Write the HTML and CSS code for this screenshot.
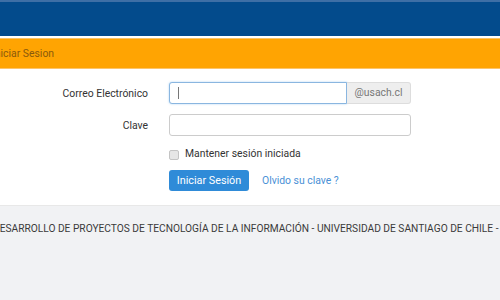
FILE: index.html
```html
<!DOCTYPE html>
<html lang="es">
<head>
    <meta charset="UTF-8">
    <meta name="viewport" content="width=device-width, initial-scale=1.0">
    <title>Iniciar Sesion</title>
    <link rel="stylesheet" href="styles.css">
</head>
<body>
    <div class="topbar"></div>

    <div class="panel-heading">Iniciar Sesion</div>

    <div class="login">
        <form class="login-form">
            <label class="form-label" for="correo">Correo Electrónico</label>
            <div class="input-group">
                <div class="field field-focus" id="correo"><span class="caret"></span></div>
                <span class="addon">@usach.cl</span>
            </div>

            <label class="form-label" for="clave">Clave</label>
            <div class="field" id="clave"></div>

            <span></span>
            <div class="check-row">
                <span class="checkbox"></span>
                <span>Mantener sesión iniciada</span>
            </div>

            <span></span>
            <div class="actions">
                <button type="button" class="btn">Iniciar Sesión</button>
                <a href="#" class="forgot">Olvido su clave ?</a>
            </div>
        </form>
    </div>

    <footer class="footer">
        <div class="footer-text">DESARROLLO DE PROYECTOS DE TECNOLOGÍA DE LA INFORMACIÓN - UNIVERSIDAD DE SANTIAGO DE CHILE - 2018</div>
    </footer>
</body>
</html>
```

FILE: styles.css
```css
html, body {
    height: 100%;
}
body {
    margin: 0;
    font-family: Roboto, "Liberation Sans", Arial, sans-serif;
    font-size: 10.4px;
    color: #333;
    background: #fff;
    display: flex;
    flex-direction: column;
    overflow: hidden;
}
.topbar {
    height: 34px;
    background: #034b8c;
    border-top: 2px solid #3e6fa6;
    border-bottom: 2px solid #fff;
}
.panel-heading {
    height: 29px;
    line-height: 29px;
    background: #ffa402;
    border-top: 1px solid #fbc468;
    border-bottom: 1px solid #fcc46a;
    color: #8a5a0c;
    text-indent: -8px;
}
.login {
    padding-top: 13px;
    height: 123px;
}
.login-form {
    display: grid;
    grid-template-columns: 148px 242px;
    column-gap: 21px;
    row-gap: 10px;
    align-items: center;
}
.form-label {
    text-align: right;
    color: #333;
}
.input-group {
    display: flex;
}
.field {
    box-sizing: border-box;
    height: 22px;
    border: 1px solid #ccc;
    border-radius: 3px;
    background: #fff;
    display: flex;
    align-items: center;
    padding-left: 8px;
}
.input-group .field {
    flex: 1;
    border-radius: 3px 0 0 3px;
}
.field-focus {
    border-color: #8ab6e0;
    box-shadow: 0 0 2px rgba(102, 175, 233, 0.6);
}
.caret {
    width: 1px;
    height: 12px;
    background: #777;
}
.addon {
    box-sizing: border-box;
    width: 64px;
    height: 22px;
    line-height: 20px;
    text-align: center;
    color: #777;
    background: #eee;
    border: 1px solid #ddd;
    border-left: 0;
    border-radius: 0 3px 3px 0;
}
.check-row {
    display: flex;
    align-items: center;
    gap: 6px;
    height: 14px;
}
.checkbox {
    box-sizing: border-box;
    width: 10px;
    height: 10px;
    margin-top: 3px;
    border: 1px solid #c4c4c4;
    border-radius: 2px;
    background: #e6e6e6;
}
.actions {
    display: flex;
    align-items: center;
    gap: 13px;
}
.btn {
    width: 80px;
    height: 21px;
    padding: 0;
    border: none;
    border-radius: 3px;
    background: #2f8bd8;
    color: #fff;
    font-family: inherit;
    font-size: 10.8px;
}
.forgot {
    color: #4a90d6;
    text-decoration: none;
}
.footer {
    flex: 1;
    background: #f1f2f4;
    border-top: 1px solid #e8e8e8;
    overflow: hidden;
}
.footer-text {
    margin-left: -7px;
    padding-top: 17px;
    white-space: nowrap;
    font-size: 10.2px;
    color: #3a3a3a;
}
```
